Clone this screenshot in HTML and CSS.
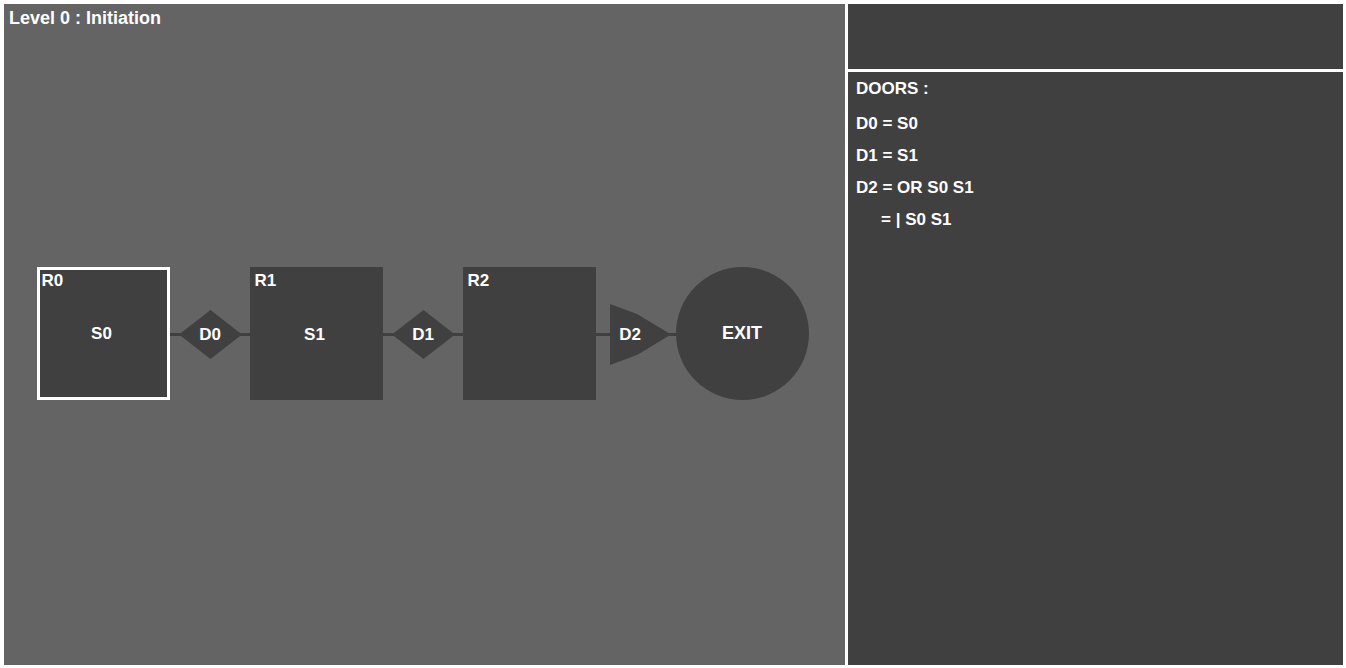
FILE: index.html
```html
<!DOCTYPE html>
<html lang="en">
<head>
<meta charset="utf-8">
<title>Level 0 : Initiation</title>
<meta name="viewport" content="width=device-width, initial-scale=1">
<link rel="stylesheet" href="styles.css">
</head>
<body>
<main class="game">
  <section class="board">
    <h1 class="level-title">Level 0 : Initiation</h1>
    <div class="map">
      <div class="room room-current"><span class="room-name">R0</span><span class="switch">S0</span></div>
      <svg class="door" viewBox="0 0 80 133">
        <path d="M0 66h80v3H0z"/>
        <path d="M9 67.5 40.5 43 72 67.5 40.5 92z"/>
        <text x="40" y="73" text-anchor="middle">D0</text>
      </svg>
      <div class="room"><span class="room-name">R1</span><span class="switch">S1</span></div>
      <svg class="door" viewBox="0 0 80 133">
        <path d="M0 66h80v3H0z"/>
        <path d="M9 67.5 40.5 43 72 67.5 40.5 92z"/>
        <text x="40" y="73" text-anchor="middle">D1</text>
      </svg>
      <div class="room"><span class="room-name">R2</span></div>
      <svg class="door" viewBox="0 0 80 133">
        <path d="M0 66h80v3H0z"/>
        <path d="M14 37 41 47 75 67.5 41 88 14 98z"/>
        <text x="34" y="73" text-anchor="middle">D2</text>
      </svg>
      <div class="exit">EXIT</div>
    </div>
  </section>
  <aside class="side">
    <div class="status"></div>
    <section class="doors">
      <h2 class="doors-title">DOORS :</h2>
      <ul class="door-list">
        <li>D0 = S0</li>
        <li>D1 = S1</li>
        <li>D2 = OR S0 S1</li>
        <li class="short-form">= | S0 S1</li>
      </ul>
    </section>
  </aside>
</main>
</body>
</html>
```

FILE: styles.css
```css
* {
  box-sizing: border-box;
}

body {
  margin: 0;
  background: #fff;
  color: #fff;
  font: bold 17px/20px "Liberation Sans", Arial, sans-serif;
}

.game {
  display: grid;
  grid-template-columns: 841fr 495fr;
  gap: 3px;
  min-height: 100vh;
  padding: 4px 3px 3px 4px;
}

.board {
  display: grid;
  background: #646464;
}

.level-title {
  grid-area: 1 / 1;
  margin: 0;
  padding: 4px 5px;
  font-size: 18px;
}

.map {
  grid-area: 1 / 1;
  display: flex;
  align-items: center;
  justify-content: center;
  padding: 0 4px 2px 0;
}

.room,
.exit {
  flex: none;
  display: grid;
  width: 133px;
  height: 133px;
  background: #404040;
}

.room {
  padding: 4px 8px 2px 5px;
}

.room-current {
  padding: 1px 5px 0 2px;
  border: 3px solid #fff;
}

.room-name,
.switch {
  grid-area: 1 / 1;
}

.switch {
  place-self: center;
}

.exit {
  place-items: center;
  padding-bottom: 2px;
  border-radius: 50%;
  font-size: 18px;
}

.door {
  flex: none;
  width: 80px;
  height: 133px;
  fill: #404040;
}

.door text {
  fill: #fff;
}

.side {
  display: grid;
  grid-template-rows: 65px 1fr;
  gap: 3px;
}

.status,
.doors {
  background: #404040;
}

.doors {
  padding: 7px 8px;
}

.doors-title {
  margin: 0 0 9px;
  font-size: 17px;
}

.door-list {
  margin: 0;
  padding: 0;
  list-style: none;
  line-height: 32px;
}

.short-form {
  padding-left: 25px;
}
```
